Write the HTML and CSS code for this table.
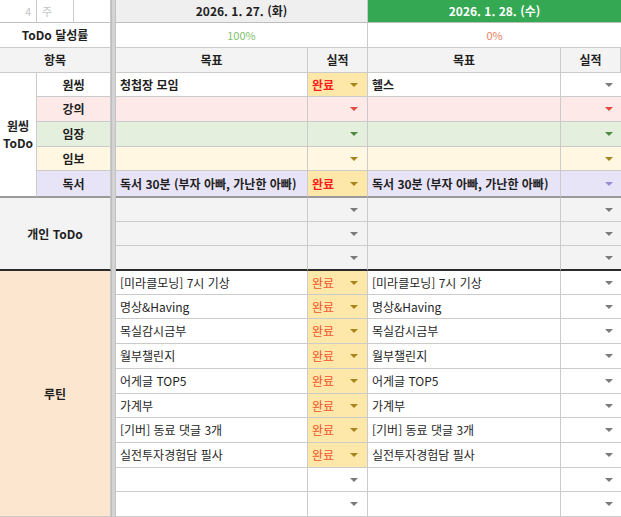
FILE: index.html
```html
<!DOCTYPE html>
<html lang="ko">
<head>
<meta charset="utf-8">
<title>ToDo</title>
<link rel="stylesheet" href="styles.css">
</head>
<body>
<div class="sheet">
  <div class="divider"></div>

  <!-- row 1 -->
  <div class="c week num">4</div>
  <div class="c week unit">주</div>
  <div class="c week"></div>
  <div class="c span2 date">2026. 1. 27. (화)</div>
  <div class="c span2 date today">2026. 1. 28. (수)</div>

  <!-- row 2 -->
  <div class="c span3 b">ToDo 달성률</div>
  <div class="c span2 pct good">100%</div>
  <div class="c span2 pct bad">0%</div>

  <!-- row 3 -->
  <div class="c span3 b head">항목</div>
  <div class="c b head">목표</div>
  <div class="c b head">실적</div>
  <div class="c b head">목표</div>
  <div class="c b head">실적</div>

  <!-- 원씽 ToDo -->
  <div class="c b onething sep1">원씽<br>ToDo</div>

  <div class="c span2 b">원씽</div>
  <div class="c goal b">청첩장 모임</div>
  <div class="c act done strong"><span>완료</span><i class="dd gold"></i></div>
  <div class="c goal b">헬스</div>
  <div class="c act last"><span></span><i class="dd"></i></div>

  <div class="c span2 b pink">강의</div>
  <div class="c goal pink"></div>
  <div class="c act pink"><span></span><i class="dd red"></i></div>
  <div class="c goal pink"></div>
  <div class="c act last pink"><span></span><i class="dd red"></i></div>

  <div class="c span2 b green">임장</div>
  <div class="c goal green"></div>
  <div class="c act green"><span></span><i class="dd grn"></i></div>
  <div class="c goal green"></div>
  <div class="c act last green"><span></span><i class="dd grn"></i></div>

  <div class="c span2 b yellow">임보</div>
  <div class="c goal yellow"></div>
  <div class="c act yellow"><span></span><i class="dd gold"></i></div>
  <div class="c goal yellow"></div>
  <div class="c act last yellow"><span></span><i class="dd gold"></i></div>

  <div class="c span2 b purple sep1">독서</div>
  <div class="c goal b purple sep1">독서 30분 (부자 아빠, 가난한 아빠)</div>
  <div class="c act done strong sep1"><span>완료</span><i class="dd gold"></i></div>
  <div class="c goal b purple sep1">독서 30분 (부자 아빠, 가난한 아빠)</div>
  <div class="c act last purple sep1"><span></span><i class="dd prp"></i></div>

  <!-- 개인 ToDo -->
  <div class="c b personal sep2">개인 ToDo</div>
  <div class="c goal gray"></div>
  <div class="c act gray"><span></span><i class="dd"></i></div>
  <div class="c goal gray"></div>
  <div class="c act last gray"><span></span><i class="dd"></i></div>
  <div class="c goal gray"></div>
  <div class="c act gray"><span></span><i class="dd"></i></div>
  <div class="c goal gray"></div>
  <div class="c act last gray"><span></span><i class="dd"></i></div>
  <div class="c goal gray sep2"></div>
  <div class="c act gray sep2"><span></span><i class="dd"></i></div>
  <div class="c goal gray sep2"></div>
  <div class="c act last gray sep2"><span></span><i class="dd"></i></div>

  <!-- 루틴 -->
  <div class="c b routine">루틴</div>

  <div class="c goal">[미라클모닝] 7시 기상</div>
  <div class="c act done"><span>완료</span><i class="dd gold"></i></div>
  <div class="c goal">[미라클모닝] 7시 기상</div>
  <div class="c act last"><span></span><i class="dd"></i></div>

  <div class="c goal">명상&amp;Having</div>
  <div class="c act done"><span>완료</span><i class="dd gold"></i></div>
  <div class="c goal">명상&amp;Having</div>
  <div class="c act last"><span></span><i class="dd"></i></div>

  <div class="c goal">목실감시금부</div>
  <div class="c act done"><span>완료</span><i class="dd gold"></i></div>
  <div class="c goal">목실감시금부</div>
  <div class="c act last"><span></span><i class="dd"></i></div>

  <div class="c goal">월부챌린지</div>
  <div class="c act done"><span>완료</span><i class="dd gold"></i></div>
  <div class="c goal">월부챌린지</div>
  <div class="c act last"><span></span><i class="dd"></i></div>

  <div class="c goal">어게글 TOP5</div>
  <div class="c act done"><span>완료</span><i class="dd gold"></i></div>
  <div class="c goal">어게글 TOP5</div>
  <div class="c act last"><span></span><i class="dd"></i></div>

  <div class="c goal">가계부</div>
  <div class="c act done"><span>완료</span><i class="dd gold"></i></div>
  <div class="c goal">가계부</div>
  <div class="c act last"><span></span><i class="dd"></i></div>

  <div class="c goal">[기버] 동료 댓글 3개</div>
  <div class="c act done"><span>완료</span><i class="dd gold"></i></div>
  <div class="c goal">[기버] 동료 댓글 3개</div>
  <div class="c act last"><span></span><i class="dd"></i></div>

  <div class="c goal">실전투자경험담 필사</div>
  <div class="c act done"><span>완료</span><i class="dd gold"></i></div>
  <div class="c goal">실전투자경험담 필사</div>
  <div class="c act last"><span></span><i class="dd"></i></div>

  <div class="c goal"></div>
  <div class="c act"><span></span><i class="dd"></i></div>
  <div class="c goal"></div>
  <div class="c act last"><span></span><i class="dd"></i></div>

  <div class="c goal"></div>
  <div class="c act"><span></span><i class="dd"></i></div>
  <div class="c goal"></div>
  <div class="c act last"><span></span><i class="dd"></i></div>
</div>
</body>
</html>
```

FILE: styles.css
```css
* { box-sizing: border-box; }

html, body {
  margin: 0;
  padding: 0;
  background: #ffffff;
}

body {
  font-family: "Noto Sans CJK KR", "Noto Sans", sans-serif;
  font-size: 12px;
  color: #1f1f1f;
  overflow: hidden;
}

.sheet {
  display: grid;
  grid-template-columns: 37px 37px 37px 5px 192px 60px 193px 60px;
  grid-template-rows: 23px 25px 25px 24px 25px 25px 24px 27px 24px 24px 25px 24px 24px 25px 25px 25px 24px 25px 25px 24px 25px;
  width: 621px;
}

.divider {
  grid-column: 4;
  grid-row: 1 / -1;
  background: #d3d3d3;
  border-left: 1px solid #bdbdbd;
  border-right: 1px solid #c4c4c4;
}

.c {
  display: flex;
  align-items: center;
  justify-content: center;
  line-height: 1;
  white-space: nowrap;
  overflow: hidden;
  border-right: 1px solid #cbcbcb;
  border-bottom: 1px solid #cbcbcb;
  background: #ffffff;
}

.span2 { grid-column: span 2; }
.span3 { grid-column: span 3; }
.b { font-weight: 700; }

.week {
  color: #c4c4c4;
  font-size: 11px;
  border-bottom: 1px solid #c0c0c0;
}
.week.num { justify-content: flex-end; padding-right: 5px; }
.week.unit { justify-content: flex-start; padding-left: 5px; }

.date {
  background: #efefef;
  font-weight: 700;
  border-bottom: 1px solid #bdbdbd;
}
.date.today {
  background: #34a853;
  color: #ffffff;
  border-right: none;
}

.pct { font-size: 11px; font-weight: 400; }
.pct.good { color: #7fbf6d; }
.pct.bad { color: #e8825f; border-right: none; }

.head { background: #f3f3f3; }

.goal {
  justify-content: flex-start;
  padding-left: 4px;
}

.act {
  justify-content: space-between;
  padding: 0 9px 0 4px;
}
.act.last {
  padding-right: 8px;
  border-right: none;
}

.done { background: #fde7a9; color: #f4532c; }
.done.strong { color: #ff1c1c; font-weight: 700; }

.dd {
  display: block;
  width: 0;
  height: 0;
  border-left: 4px solid transparent;
  border-right: 4px solid transparent;
  border-top: 4px solid #7a7a7a;
}
.dd.gold { border-top-color: #a8841f; }
.dd.red { border-top-color: #e5483f; }
.dd.grn { border-top-color: #4f8a45; }
.dd.prp { border-top-color: #9a8bd6; }

.pink { background: #fde9e8; }
.green { background: #e5efdd; }
.yellow { background: #fff7e2; }
.purple { background: #e8e4f7; }
.gray { background: #f3f3f3; }

.onething {
  grid-row: span 5;
  text-align: center;
  line-height: 1.35;
}

.personal {
  grid-column: span 3;
  grid-row: span 3;
  background: #f3f3f3;
}

.routine {
  grid-column: span 3;
  grid-row: span 10;
  background: #fce6cf;
}

.sep1 { border-bottom: 2px solid #9a9a9a; }
.sep2 { border-bottom: 2px solid #2a2a2a; }
```
